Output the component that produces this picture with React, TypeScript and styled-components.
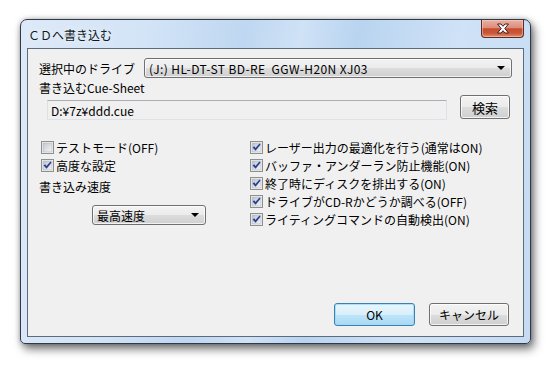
import React from 'react'
import styled, { createGlobalStyle } from 'styled-components'

const GlobalStyle = createGlobalStyle`
    html, body {
        margin: 0;
        padding: 0;
        background: #ffffff;
    }
    body {
        font-family: "Noto Sans CJK JP", "Noto Sans", sans-serif;
        font-size: 12px;
        color: #000;
    }
`

const Stage = styled.div`
    width: 553px;
    height: 367px;
    box-sizing: border-box;
    padding: 19px 0 0 20px;
`

const Window = styled.div`
    width: 511px;
    height: 325px;
    box-sizing: border-box;
    display: flex;
    flex-direction: column;
    border: 1px solid #2f3a48;
    border-radius: 7px 7px 5px 5px;
    background: linear-gradient(100deg, #dde9f8 0%, #d3e4f7 22%, #bfd7f1 40%, #cfe2f6 50%, #b9d4f0 60%, #cfe2f7 78%, #c4dbf3 100%);
    box-shadow: 3px 5px 10px rgba(0, 0, 0, 0.55), 0 0 5px rgba(0, 0, 0, 0.25);
`

const TitleBar = styled.div`
    height: 28px;
    display: flex;
    align-items: flex-start;
    justify-content: space-between;
    padding: 0 6px 0 7px;
`

const Title = styled.span`
    margin-top: 6px;
    font-size: 12px;
    color: #101820;
    text-shadow: 0 0 6px rgba(255, 255, 255, 0.9);
`

const CloseButton = styled.div`
    width: 43px;
    height: 18px;
    box-sizing: border-box;
    display: flex;
    align-items: center;
    justify-content: center;
    border: 1px solid #5e2b24;
    border-top: none;
    border-radius: 0 0 4px 4px;
    background: linear-gradient(#eab0a2 0%, #dc8e7c 45%, #c74a2e 52%, #c9583a 78%, #e39070 100%);
    box-shadow: inset 0 0 0 1px rgba(255, 220, 210, 0.45);
`

const Client = styled.div`
    flex: 1;
    margin: 0 6px 6px;
    box-sizing: border-box;
    display: flex;
    flex-direction: column;
    padding: 9px 11px 10px;
    border: 1px solid #5d6b7b;
    background: #f0f0f0;
`

const DriveRow = styled.div`
    display: flex;
    align-items: center;
    height: 20px;
`

const FieldLabel = styled.span<{ $width?: number }>`
    width: ${p => (p.$width ? `${p.$width}px` : 'auto')};
    flex-shrink: 0;
`

const Combo = styled.div<{ $width: number; $left?: number; $spacing?: number }>`
    position: relative;
    width: ${p => p.$width}px;
    height: 20px;
    margin-left: ${p => p.$left || 0}px;
    box-sizing: border-box;
    display: flex;
    align-items: center;
    padding-left: 4px;
    white-space: pre;
    letter-spacing: ${p => p.$spacing || 0}px;
    border: 1px solid #707070;
    border-radius: 3px;
    background: linear-gradient(#f3f3f3 0%, #ebebeb 50%, #dddddd 51%, #cfcfcf 100%);
    box-shadow: inset 0 0 0 1px rgba(255, 255, 255, 0.7);

    &::after {
        content: '';
        position: absolute;
        right: 6px;
        top: 7px;
        border-left: 4px solid transparent;
        border-right: 4px solid transparent;
        border-top: 4px solid #000;
    }
`

const SpeedCombo = styled(Combo)`
    margin-top: 12px;
`

const SheetLabel = styled.div`
    height: 17px;
    display: flex;
    align-items: flex-end;
    line-height: 15px;
`

const PathRow = styled.div`
    display: flex;
    align-items: flex-start;
`

const PathField = styled.div`
    width: 400px;
    height: 20px;
    margin: 5px 0 0 8px;
    box-sizing: border-box;
    display: flex;
    align-items: center;
    padding-left: 3px;
    border: 1px solid #dde2e8;
    border-top-color: #abadb3;
    background: #f0f0f0;
`

const PushButton = styled.div<{ $width: number; $primary?: boolean }>`
    width: ${p => p.$width}px;
    height: 23px;
    box-sizing: border-box;
    display: flex;
    align-items: center;
    justify-content: center;
    border: 1px solid ${p => (p.$primary ? '#3c7fb1' : '#707070')};
    border-radius: 3px;
    background: ${p => (p.$primary
        ? 'linear-gradient(#e9f5fc 0%, #d9effb 50%, #bde5fb 51%, #a9d9f2 100%)'
        : 'linear-gradient(#f3f3f3 0%, #ebebeb 50%, #dddddd 51%, #cfcfcf 100%)')};
    box-shadow: inset 0 0 0 1px ${p => (p.$primary ? 'rgba(150, 220, 250, 0.8)' : 'rgba(255, 255, 255, 0.75)')};
`

const SearchButton = styled(PushButton)`
    height: 24px;
    margin-left: 13px;
    font-size: 13px;
`

const Options = styled.div`
    display: grid;
    grid-template-columns: 209px 1fr;
    margin: 18px 0 0 2px;
`

const Column = styled.div`
    display: flex;
    flex-direction: column;
`

const CheckRow = styled.div`
    height: 18px;
    display: flex;
    align-items: center;
    gap: 2px;
    white-space: nowrap;
`

const SpeedLabel = styled.div`
    height: 14px;
    margin: 5px 0 0 -2px;
    display: flex;
    align-items: center;
`

const Footer = styled.div`
    margin-top: auto;
    display: flex;
    justify-content: flex-end;
    gap: 14px;
    padding-right: 3px;
`

const CloseGlyph = () => (
    <svg width="14" height="11" viewBox="0 0 14 11">
        <path d="M1.5 1 L5 1 L7 3.3 L9 1 L12.5 1 L8.8 5.5 L12.5 10 L9 10 L7 7.7 L5 10 L1.5 10 L5.2 5.5 Z"
            fill="#ffffff" stroke="#3b2320" strokeWidth="1" strokeLinejoin="round" />
    </svg>
)

const CheckBox = ({ checked }: { checked: boolean }) => (
    <svg width="13" height="13" viewBox="0 0 13 13" style={{ flexShrink: 0 }}>
        <defs>
            <linearGradient id={checked ? 'cbOn' : 'cbOff'} x1="0" y1="0" x2="1" y2="1">
                <stop offset="0" stopColor={checked ? '#b9c3cf' : '#c3c6cb'} />
                <stop offset="1" stopColor="#f4f5f6" />
            </linearGradient>
        </defs>
        <rect x="0.5" y="0.5" width="12" height="12" fill="#f6f6f6" stroke="#8e8f8f" />
        <rect x="2" y="2" width="9" height="9" fill={`url(#${checked ? 'cbOn' : 'cbOff'})`} stroke="#aeb4ba" strokeWidth="0.6" />
        {checked && (
            <path d="M2.6 6.4 L4.2 5.2 L5.5 7 L9.4 2.6 L10.6 3.6 L5.6 9.8 Z" fill="#2b3f8f" />
        )}
    </svg>
)

const Check = ({ checked, children }: { checked: boolean; children: React.ReactNode }) => (
    <CheckRow>
        <CheckBox checked={checked} />
        <span>{children}</span>
    </CheckRow>
)

const rightOptions = [
    'レーザー出力の最適化を行う(通常はON)',
    'バッファ・アンダーラン防止機能(ON)',
    '終了時にディスクを排出する(ON)',
    'ドライブがCD-Rかどうか調べる(OFF)',
    'ライティングコマンドの自動検出(ON)',
]

export default function App() {
    return (
        <Stage>
            <GlobalStyle />
            <Window>
                <TitleBar>
                    <Title>ＣＤへ書き込む</Title>
                    <CloseButton>
                        <CloseGlyph />
                    </CloseButton>
                </TitleBar>
                <Client>
                    <DriveRow>
                        <FieldLabel $width={105}>選択中のドライブ</FieldLabel>
                        <Combo $width={368} $spacing={0.4}>(J:) HL-DT-ST BD-RE  GGW-H20N XJ03</Combo>
                    </DriveRow>
                    <SheetLabel>書き込むCue-Sheet</SheetLabel>
                    <PathRow>
                        <PathField>D:¥7z¥ddd.cue</PathField>
                        <SearchButton $width={50}>検索</SearchButton>
                    </PathRow>
                    <Options>
                        <Column>
                            <Check checked={false}>テストモード(OFF)</Check>
                            <Check checked>高度な設定</Check>
                            <SpeedLabel>書き込み速度</SpeedLabel>
                            <SpeedCombo $width={114} $left={51}>最高速度</SpeedCombo>
                        </Column>
                        <Column>
                            {rightOptions.map(text => (
                                <Check key={text} checked>{text}</Check>
                            ))}
                        </Column>
                    </Options>
                    <Footer>
                        <PushButton $width={81} $primary>OK</PushButton>
                        <PushButton $width={80}>キャンセル</PushButton>
                    </Footer>
                </Client>
            </Window>
        </Stage>
    )
}
